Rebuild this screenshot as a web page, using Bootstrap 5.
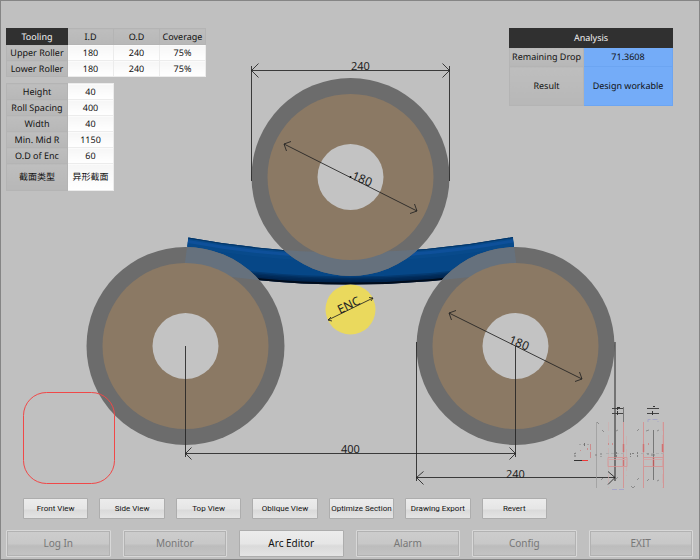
<!DOCTYPE html>
<html lang="en">
<head>
<meta charset="utf-8">
<meta name="viewport" content="width=device-width, initial-scale=1">
<title>Arc Editor</title>
<link href="https://cdn.jsdelivr.net/npm/bootstrap@5.3.0/dist/css/bootstrap.min.css" rel="stylesheet">
<style>
  body { background: #c0c0c0; color: #111; font-family: "Noto Sans", "Noto Sans CJK SC", sans-serif; font-size: 9px; line-height: 12px; text-rendering: geometricPrecision; }
  .frame { border: 1px solid #858585; min-height: 100vh; }
  .stage { display: grid; }
  .stage > * { grid-area: 1 / 1; min-width: 0; }
  .panels { padding: 27px 26px 0 5px; }
  .tooling { gap: 6px; }
  .grid-table { border-collapse: collapse; table-layout: fixed; text-align: center; }
  .grid-table th, .grid-table td { font-weight: 400; line-height: 11px; padding: 0 0 1px; text-align: center; vertical-align: middle; white-space: nowrap; }
  .grid-table tr { height: 16px; }
  .grid-table tr.tall { height: 27px; }
  .grid-table th { background: linear-gradient(#bebebe, #b7b7b7); border: 1px solid #b4b4b4; }
  .grid-table td { background: linear-gradient(#f6f6f6, #fff); border: 1px solid #ececec; }
  .grid-table th.title { background: #303030; color: #f2f2f2; border-color: #303030; }
  .c-name { width: 61px; }
  .c-val { width: 46px; }
  .c-key { width: 74px; }
  .c-res { width: 89px; }
  .grid-table.analysis tr { height: 19px; }
  .grid-table.analysis tr.tall { height: 39px; }
  .grid-table.analysis td { background: #74acf8; border-color: #6ca5f2; }
  .views { display: grid; grid-template-columns: repeat(7, 1fr); gap: 11px; padding: 8px 152px 0 22px; }
  .tabs { display: grid; grid-template-columns: repeat(6, 1fr); gap: 12px; padding: 11px 6px 2px 5px; }
  .views .btn, .tabs .btn { --bs-btn-padding-x: 0; --bs-btn-padding-y: 0; --bs-btn-border-radius: 1px; white-space: nowrap; color: #111; border-color: #adadad;
    background: linear-gradient(#ececec, #e6e6e6 50%, #dadada 60%, #e4e4e4); }
  .views .btn { font-family: Roboto, "Noto Sans", sans-serif; font-size: 8px; line-height: 19px; height: 21px; }
  .tabs .btn { font-size: 10px; line-height: 25px; height: 27px; }
  .tabs .btn.idle { color: #777; border: 1px solid #d8d8d8; outline: 1px solid #b2b2b2; outline-offset: -2px; background: linear-gradient(#cdcdcd, #c8c8c8 50%, #bcbcbc 60%, #c4c4c4); }
  .drawing text { font-size: 11px; fill: #222; }
  .drawing text.slanted { font-size: 12px; }
  .dim { fill: none; stroke: #222; stroke-width: 1; stroke-opacity: .85; }
</style>
<script src="https://cdn.jsdelivr.net/npm/bootstrap@5.3.0/dist/js/bootstrap.bundle.min.js"></script>
</head>
<body>
<div class="frame d-flex flex-column justify-content-between">
  <main class="stage">
    <svg class="drawing w-100 h-auto" viewBox="1 1 698 489" role="img" aria-label="Roller arrangement">
      <defs>
        <path id="bar" d="M188.300 237.500Q351 267.500 513 237L517 270Q350 299 184 270Z"/>
        <clipPath id="barClip"><use href="#bar"/></clipPath>
        <clipPath id="ringClip"><circle cx="350.500" cy="177" r="99"/><circle cx="185.500" cy="346" r="99"/><circle cx="515.500" cy="346" r="99"/></clipPath>
      </defs>
      <g clip-path="url(#barClip)" fill="none">
        <use href="#bar" fill="#064787"/>
        <path d="M188 237.500Q351 267.500 513 237" stroke="#084a8b" stroke-width="18"/>
        <path d="M188 241.500Q351 271.500 513 241" stroke="#0e509a" stroke-width="3"/>
        <path d="M188 237.500Q351 267.500 513 237" stroke="#053565" stroke-width="2"/>
        <g stroke="#001a3a" stroke-opacity=".28">
          <path d="M184 270Q350 299 517 270" stroke-width="16"/>
          <path d="M184 270Q350 299 517 270" stroke-width="13"/>
          <path d="M184 270Q350 299 517 270" stroke-width="10"/>
          <path d="M184 270Q350 299 517 270" stroke-width="7"/>
        </g>
        <path d="M184 270Q350 299 517 270" stroke="#000c1c" stroke-width="4"/>
      </g>
      <g fill="#6c6c6c"><circle cx="350.500" cy="177" r="99"/><circle cx="185.500" cy="346" r="99"/><circle cx="515.500" cy="346" r="99"/></g>
      <g clip-path="url(#ringClip)"><use href="#bar" fill="#66717d"/></g>
      <g fill="#8b7964"><circle cx="350.500" cy="177" r="83"/><circle cx="185.500" cy="346" r="83"/><circle cx="515.500" cy="346" r="83"/></g>
      <g fill="#c3c3c3"><circle cx="350.500" cy="177" r="33"/><circle cx="185.500" cy="346" r="33"/><circle cx="515.500" cy="346" r="33"/></g>
      <circle cx="350.500" cy="309.500" r="25" fill="#ead95d"/>

      <g class="dim">
        <path d="M251.500 66V181M449.500 66V181M251.500 70.500H449.500"/>
        <path d="M258.500 63.500L251.500 70.500L258.500 77.500M442.500 63.500L449.500 70.500L442.500 77.500"/>
        <path d="M284 144L417 211M291 141.500L284 144L286.500 151M414.500 204L417 211L410 213.500"/>
        <path d="M449 313L582 379M456 310.500L449 313L451.500 320M579.500 372L582 379L575 381.500"/>
        <path d="M185.500 346V457M515.500 346V457M185.500 453.500H515.500M191.500 447.500L185.500 453.500L191.500 459.500M509.500 447.500L515.500 453.500L509.500 459.500"/>
        <path d="M416.500 342V481M416.500 477.500H615M423.500 471.500L416.500 477.500L423.500 484.500M608 471.500L615 477.500L608 484.500"/>
        <path d="M615 342V481" stroke-width="1.500" stroke-opacity=".65"/>
        <path d="M328 320L373 298M331 317L328 320L332 321M369 297.500L373 298L371 301"/>
      </g>
      <circle cx="350.500" cy="177" r="1"/>
      <text x="351" y="70">240</text>
      <text x="341" y="453">400</text>
      <text x="506" y="478">240</text>
      <text class="slanted" transform="translate(351 179) rotate(22)">180</text>
      <text class="slanted" transform="translate(508 343) rotate(22)">180</text>
      <text class="slanted" transform="translate(340 314) rotate(-26)">ENC</text>
      <rect x="23.500" y="392.500" width="91" height="91" rx="23" fill="none" stroke="#f04848"/>

      <g fill="none" stroke-width="1">
        <path d="M612 408.500H624M612 413.500H624M647 408.500H659M647 413.500H659" stroke="#444"/>
        <path d="M617.500 407V410M618 407.500H620M617.500 411V415M652.500 411V415M653 406.500H655" stroke="#333"/>
        <path d="M623.500 407V422M653.500 430V480" stroke="#777"/>
        <g opacity=".7">
          <path d="M596.500 422V488" stroke="#999"/>
          <path d="M608.500 422V488M626.500 436V476M662.500 422V488" stroke="#cdb0b0" stroke-dasharray="9 4"/>
          <path d="M623.500 422V488M643.500 422V488M663.500 422V488" stroke="#dc8585"/>
          <path d="M623.500 444V452M623.500 458V466M643.500 444V452M662.500 444V452M653.500 458V466" stroke="#d95050" stroke-width="1.500"/>
          <path d="M608 457.500H627V466.500H608ZM643.500 457.500H663V466.500H643.500Z" stroke="#dc8a8a"/>
          <path d="M608 459.500H627M643.500 459.500H663" stroke="#d9a0a0"/>
          <path d="M606 453.500H626M641 453.500H666" stroke="#a9a9a9" stroke-dasharray="3 2"/>
          <path d="M648 422V419.500H658V422M612 489.500H624" stroke="#9c9cc9" stroke-dasharray="5 2"/>
          <path d="M579 444.500H590" stroke="#999" stroke-dasharray="2 2"/>
          <path d="M590.500 444V458M580.500 450V451M587.500 448V450M608.500 443V445M612.500 443V445M648.500 443V445" stroke="#d07777" stroke-dasharray="6 2"/>
          <path d="M584.500 443V446M574 454L576 453M574 456H576" stroke="#555"/>
          <path d="M597 422L599 424M602 430L604 432M616 431L618 430M637 431L639 429M601 480L603 478M616 479L618 477M637 480L639 478M631 486L633 488L635 486M646 431L649 430M657 431L659 430M647 481L649 479M657 481L659 480" stroke="#777"/>
          <path d="M596 454V457M601 453V457M616.500 452V457M630.500 453V457M632 453.500H634M637.500 452V457M648 453V456M651 455H655" stroke="#666" stroke-dasharray="2 1"/>
        </g>
        <path d="M574 460.500H583" stroke="#333"/>
        <path d="M582 460.500H588" stroke="#ef3838"/>
      </g>
    </svg>

    <div class="panels d-flex justify-content-between align-items-start">
      <div class="tooling d-flex flex-column align-items-start">
        <table class="grid-table">
          <colgroup><col class="c-name"><col class="c-val"><col class="c-val"><col class="c-val"></colgroup>
          <thead><tr><th class="title">Tooling</th><th>I.D</th><th>O.D</th><th>Coverage</th></tr></thead>
          <tbody>
            <tr><th>Upper Roller</th><td>180</td><td>240</td><td>75%</td></tr>
            <tr><th>Lower Roller</th><td>180</td><td>240</td><td>75%</td></tr>
          </tbody>
        </table>
        <table class="grid-table">
          <colgroup><col class="c-name"><col class="c-val"></colgroup>
          <tbody>
            <tr><th>Height</th><td>40</td></tr>
            <tr><th>Roll Spacing</th><td>400</td></tr>
            <tr><th>Width</th><td>40</td></tr>
            <tr><th>Min. Mid R</th><td>1150</td></tr>
            <tr><th>O.D of Enc</th><td>60</td></tr>
            <tr class="tall" lang="zh-CN"><th>截面类型</th><td>异形截面</td></tr>
          </tbody>
        </table>
      </div>
      <table class="grid-table analysis">
        <colgroup><col class="c-key"><col class="c-res"></colgroup>
        <thead><tr><th class="title" colspan="2">Analysis</th></tr></thead>
        <tbody>
          <tr><th>Remaining Drop</th><td>71.3608</td></tr>
          <tr class="tall"><th>Result</th><td>Design workable</td></tr>
        </tbody>
      </table>
    </div>
  </main>

  <footer>
    <div class="views">
      <button type="button" class="btn">Front View</button>
      <button type="button" class="btn">Side View</button>
      <button type="button" class="btn">Top View</button>
      <button type="button" class="btn">Oblique View</button>
      <button type="button" class="btn">Optimize Section</button>
      <button type="button" class="btn">Drawing Export</button>
      <button type="button" class="btn">Revert</button>
    </div>
    <nav class="tabs" aria-label="Screens">
      <button type="button" class="btn idle">Log In</button>
      <button type="button" class="btn idle">Monitor</button>
      <button type="button" class="btn" aria-current="page">Arc Editor</button>
      <button type="button" class="btn idle">Alarm</button>
      <button type="button" class="btn idle">Config</button>
      <button type="button" class="btn idle">EXIT</button>
    </nav>
  </footer>
</div>
</body>
</html>
